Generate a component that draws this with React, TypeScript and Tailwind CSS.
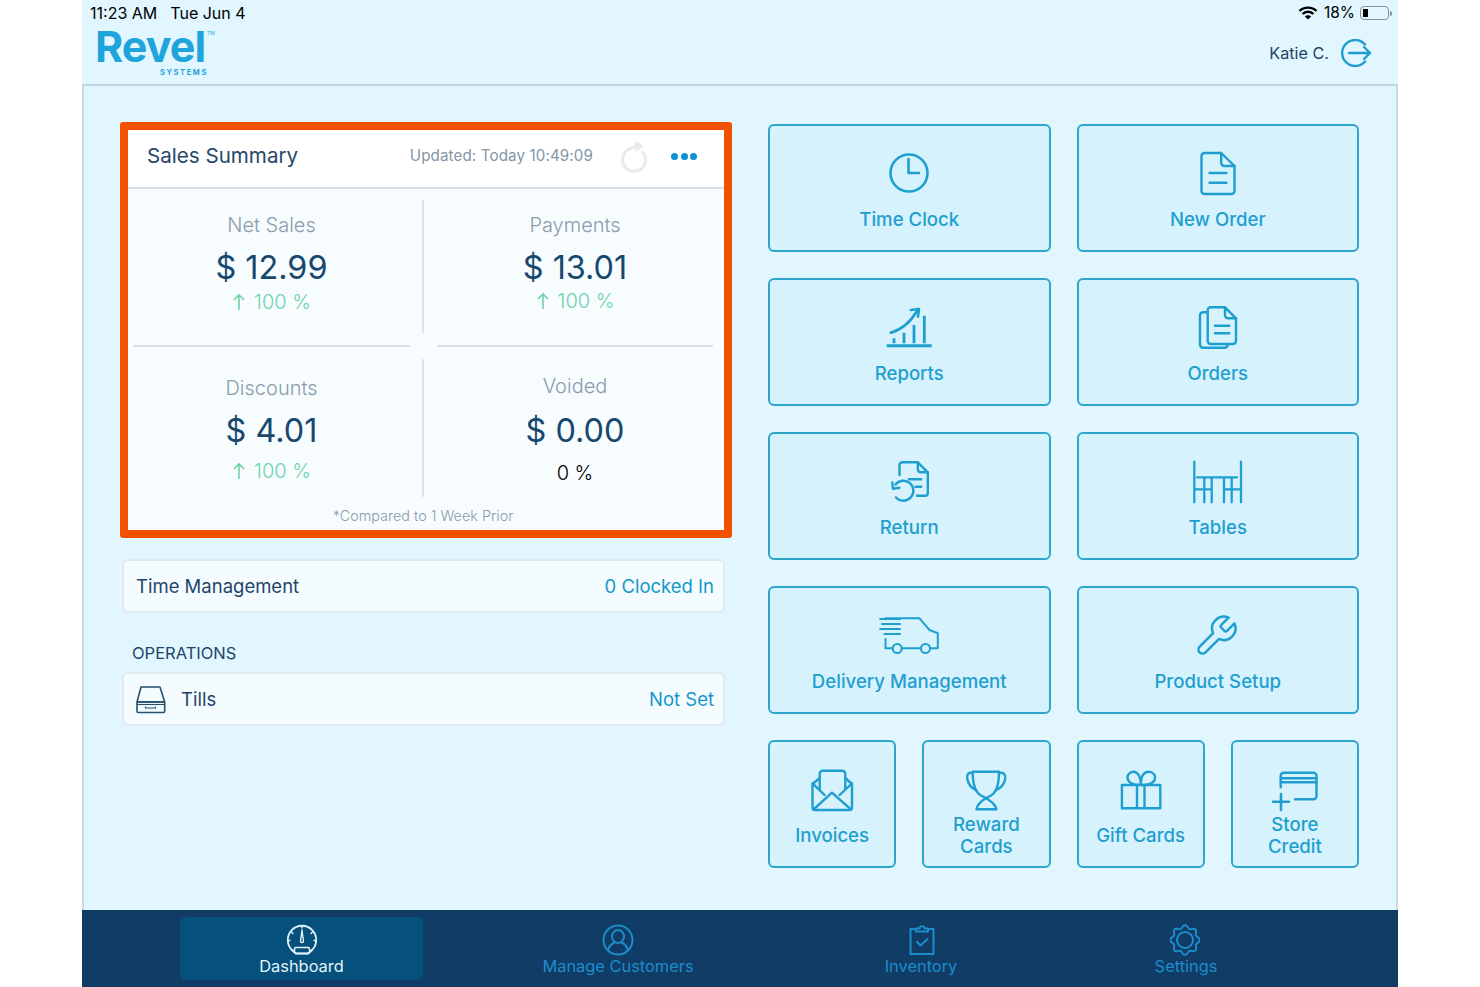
import React from "react";

const Svg = ({ children }: { children: React.ReactNode }) => (
  <svg width="60" height="50" viewBox="0 0 60 50" fill="none" stroke="#1f9fd0" strokeWidth="2.4" strokeLinecap="round" strokeLinejoin="round">
    {children}
  </svg>
);

const ClockI = () => (
  <Svg>
    <circle cx="30" cy="25" r="18.5" strokeWidth="2.6" />
    <path d="M29.5 11V25H40" strokeWidth="2.6" />
  </Svg>
);
const DocI = () => (
  <Svg>
    <g transform="translate(4.5 0)">
      <path d="M12 5H28.7L42 18V43a3 3 0 0 1-3 3H12a3 3 0 0 1-3-3V8a3 3 0 0 1 3-3Z" />
      <path d="M28.7 5V15a3 3 0 0 0 3 3H42" />
      <path d="M17 25H34M17 34.7H34" />
    </g>
  </Svg>
);
const ReportsI = () => (
  <Svg>
    <path d="M7.7 43.7H52.7" strokeWidth="3" strokeLinecap="butt" />
    <path d="M15 36.3V41.3M25 30.7V41.3M35 23V41.3M45.3 13.7V41.3" strokeWidth="2.8" strokeLinecap="butt" />
    <path d="M11.7 30.7Q28 26 38 9" strokeWidth="2.6" />
    <path d="M31.7 8L40 7L39 14.7" strokeWidth="2.6" />
  </Svg>
);
const OrdersI = () => (
  <Svg>
    <path d="M19.7 10.3H15a3 3 0 0 0-3 3V42.7a3 3 0 0 0 3 3H36.7a3 3 0 0 0 3-3V42" />
    <path d="M22.7 5.3H37L48 16.3V39a3 3 0 0 1-3 3H22.7a3 3 0 0 1-3-3V8.3a3 3 0 0 1 3-3Z" />
    <path d="M37 5.3V13.3a3 3 0 0 0 3 3H48" />
    <path d="M27 23.7H41.3M27 31.3H41.3" />
  </Svg>
);
const ReturnI = () => (
  <Svg>
    <path d="M20.5 19V9.3a3 3 0 0 1 3-3H38.8L48.8 16.3V37a2.7 2.7 0 0 1-2.7 2.7H38" />
    <path d="M38.8 6.3V13.3a3 3 0 0 0 3 3H48.8" />
    <path d="M29.8 23.3H42.2M36.5 30.7H42.2" />
    <path d="M16.5 28.5A10 10 0 1 1 17 41.5" />
    <path d="M13.3 26.5L14 32.8L20.5 31.8" />
  </Svg>
);
const TablesI = () => (
  <Svg>
    <path d="M6.3 5.7V46.3M53 5.7V46.3M9 21.3H49M16.3 21.3V46.3M23.7 21.3V46.3M36 21.3V46.3M43.7 21.3V46.3M6.3 33.3H23.7M36 33.3H53" strokeWidth="2.3" />
  </Svg>
);
const VanI = () => (
  <Svg>
    <path d="M6.5 8.3H40.5L50.5 20L58.8 23.3V38.3H51" strokeWidth="2" />
    <path d="M6.5 29V38.3H13.7M22.7 38.3H42" strokeWidth="2" />
    <circle cx="18.2" cy="38.5" r="4.5" strokeWidth="2" />
    <circle cx="46.5" cy="38.5" r="4.5" strokeWidth="2" />
    <path d="M1.2 9H21M3 14H21M1.2 19H21M5.5 24H21" strokeWidth="2" />
  </Svg>
);
const WrenchI = () => (
  <Svg>
    <g transform="translate(4.6 2.7) scale(1.95)" strokeWidth="1.25">
      <path d="M14.7 6.3a1 1 0 0 0 0 1.4l1.6 1.6a1 1 0 0 0 1.4 0l3.77-3.77a6 6 0 0 1-7.94 7.94l-6.91 6.91a2.12 2.12 0 0 1-3-3l6.91-6.91a6 6 0 0 1 7.94-7.94l-3.76 3.76z" />
    </g>
  </Svg>
);
const EnvelopeI = () => (
  <Svg>
    <path d="M17.7 25V9.7a3 3 0 0 1 3-3H40.3a3 3 0 0 1 3 3V25" />
    <path d="M17.7 14L10.5 20V43.5a2.5 2.5 0 0 0 2.5 2.5H47.5a2.5 2.5 0 0 0 2.5-2.5V20L43.3 14" />
    <path d="M10.5 19.3L22.6 31M50 19.3L37.6 31" />
    <path d="M11.5 45.5L30 28.7L49 45.5" />
  </Svg>
);
const TrophyI = () => (
  <Svg>
    <path d="M16.7 7.7H43C43 20 41 28 35 31.5C32 33 30.5 34 30 34.3C29.5 34 28 33 25 31.5C19 28 16.7 20 16.7 7.7Z" />
    <path d="M16.7 9C12.5 8 10.5 10.5 11.2 14.5C12 19 15 24 20.5 26.5M43 9C47.5 8 50 10.5 49.3 14.5C48.5 19 45.5 24 39.5 26.5" />
    <path d="M30 34.3C27 36 21.5 40 20.5 45.3H40.5C39.5 40 33 36 30 34.3Z" />
  </Svg>
);
const GiftI = () => (
  <Svg>
    <path d="M10.9 21H49.3V44.3H10.9ZM26 21V44.3M33.5 21V44.3" />
    <path d="M29.8 21C23 21 16.5 19 16.5 13.5C16.5 9.5 20 7.7 22.5 7.7C26.5 7.7 29.8 12 29.8 21C29.8 12 33 7.7 37.5 7.7C40.5 7.7 44 9.5 44 13.5C44 19 37 21 29.8 21Z" />
  </Svg>
);
const CreditI = () => (
  <Svg>
    <path d="M15.7 23.3V11.7a3 3 0 0 1 3-3H48.5a3 3 0 0 1 3 3V32.3a3 3 0 0 1-3 3H30" />
    <path d="M15.7 14.3H51.5M15.7 18.3H51.5" />
    <path d="M8 37.7H24M16 30V46" strokeWidth="2.6" />
  </Svg>
);

const Tile = ({ label, icon, wide }: { label: React.ReactNode; icon: React.ReactNode; wide?: boolean }) => (
  <div className={`${wide ? "col-span-2" : ""} h-[128px] rounded-[6px] border-2 border-[#2ea6cc] bg-[#d6f2fd] flex flex-col items-center pt-[22px]`}>
    <div className="h-[50px] flex justify-center">{icon}</div>
    <div className="h-[41px] flex items-center justify-center text-center text-[18.6px] leading-[22px] font-medium text-[#1f9fd0]">{label}</div>
  </div>
);

const Up = () => (
  <svg width="14" height="18" viewBox="0 0 14 18" fill="none" stroke="#6fd3a8" strokeWidth="1.6" className="mr-[8px]">
    <path d="M7 17V2M2 7L7 2L12 7" />
  </svg>
);

const Change = ({ cls }: { cls: string }) => (
  <div className={`flex items-center text-[20px] leading-[24px] font-light text-[#6fd3a8] ${cls}`}>
    <Up />
    100 %
  </div>
);

const Label = ({ children }: { children: React.ReactNode }) => (
  <div className="text-[20px] leading-[24px] font-light text-[#8a9bab]">{children}</div>
);
const Value = ({ children, cls }: { children: React.ReactNode; cls: string }) => (
  <div className={`text-[32.4px] leading-[40px] font-normal text-[#17486e] ${cls}`}>{children}</div>
);

const VRule = ({ cls }: { cls: string }) => (
  <div className="flex justify-center">
    <div className={`w-[2px] -ml-[1px] bg-[#dfe5ea] ${cls}`} />
  </div>
);

const RowCard = ({ children }: { children: React.ReactNode }) => (
  <div className="ml-[2px] mr-[7px] h-[54px] rounded-[6px] border-2 border-[#e0e9ee] bg-[#f5fcff] flex items-center justify-between pl-[12px] pr-[9px] pt-[1px] text-[18.5px] text-[#1f4468]">
    {children}
  </div>
);

const Refresh = () => (
  <svg width="28" height="34" viewBox="0 0 28 34" fill="none" stroke="#e8ebed" strokeWidth="3" strokeLinecap="round">
    <path d="M9 10.5A11.5 11.5 0 1 0 22.5 13" />
    <path d="M15 2L24 7L15 13Z" fill="#e8ebed" stroke="none" />
    <path d="M9 10.5C11 9 13 8 16 7.5" />
  </svg>
);

const gearPath = (() => {
  const pts: string[] = [];
  for (let i = 0; i < 144; i++) {
    const a = (i / 144) * Math.PI * 2;
    const r = 13.3 + 1.5 * Math.cos(8 * a);
    pts.push(`${(15 + r * Math.sin(a)).toFixed(2)} ${(15 - r * Math.cos(a)).toFixed(2)}`);
  }
  return "M" + pts.join("L") + "Z";
})();

const NavItem = ({ label, icon, active, cls }: { label: string; icon: React.ReactNode; active?: boolean; cls: string }) => (
  <div className={`h-[63px] flex flex-col items-center justify-start pt-[7px] rounded-[6px] ${active ? "bg-[#05507c] text-[#e3f3fa]" : "text-[#1c8ccb]"} ${cls}`}>
    <div className="h-[30px] flex justify-center">{icon}</div>
    <div className="mt-[2px] text-[16.4px] leading-[20px]">{label}</div>
  </div>
);

export default function App() {
  return (
    <div className="w-[1480px] h-[987px] bg-white flex justify-center overflow-hidden font-['Inter',sans-serif]">
      <div className="w-[1316px] h-full bg-[#e1f6fe] flex flex-col">
        <header className="h-[86px] border-b-2 border-[#c3d5dc] flex flex-col">
          <div className="h-[26px] flex items-center justify-between pl-[8px] pr-[6px] text-black">
            <div className="flex gap-[13px] text-[16px]">
              <span>11:23 AM</span>
              <span>Tue Jun 4</span>
            </div>
            <div className="flex items-center text-[15.5px]">
              <svg width="20" height="14" viewBox="0 0 20 14" fill="none" stroke="#000" strokeWidth="2.4">
                <path d="M1.5 5C6 0.5 14 0.5 18.5 5" />
                <path d="M4.5 8C7.5 5 12.5 5 15.5 8" />
                <path d="M10 13.5L6.8 10.4C8.6 8.8 11.4 8.8 13.2 10.4Z" fill="#000" stroke="none" />
              </svg>
              <span className="ml-[6px]">18%</span>
              <div className="ml-[5px] w-[29px] h-[14px] rounded-[4px] border border-[#8a9296] p-[2px]">
                <div className="w-[5px] h-full bg-black" />
              </div>
              <div className="w-[2px] h-[5px] bg-[#8a9296] rounded-r-sm ml-[1px]" />
            </div>
          </div>
          <div className="flex-1 flex items-start justify-between pl-[13px] pr-[26px]">
            <div className="relative w-[120px] -mt-[3px] text-[#1fa5dc]">
              <div className="text-[43px] leading-[46px] font-bold tracking-[-0.9px]">Revel</div>
              <div className="absolute left-[65px] top-[45px] text-[7.5px] font-bold leading-[10px] tracking-[1.6px]">SYSTEMS</div>
              <div className="absolute left-[112px] top-[7px] text-[5px] leading-[6px]">TM</div>
            </div>
            <div className="flex items-center gap-[9px] mt-[13px]">
              <span className="text-[16.2px] text-[#1f4468]">Katie C.</span>
              <svg width="34" height="28" viewBox="0 0 34 28" fill="none" stroke="#1f9fd0" strokeWidth="2.4" strokeLinecap="round" strokeLinejoin="round">
                <path d="M27 5.5A13 13 0 1 0 27 22.5" />
                <path d="M11 14H32M26 8L32 14L26 20" />
              </svg>
            </div>
          </div>
        </header>

        <main className="flex-1 border-x-2 border-[#c8dbe2] flex pl-[36px] pr-[37px] pt-[36px] gap-[36px]">
          <div className="w-[612px] flex flex-col">
            <section className="h-[416px] rounded-[3px] border-[8px] border-[#f25100] bg-[#f7fcff] flex flex-col">
              <div className="h-[59px] shrink-0 bg-white border-b-2 border-[#dcdfe2] flex items-center pl-[19px] pr-[27px] pb-[5px]">
                <div className="text-[20.6px] text-[#27476a] flex-1">Sales Summary</div>
                <div className="text-[15.2px] text-[#8496a7] tracking-[0.1px] mr-[27px]">Updated: Today 10:49:09</div>
                <Refresh />
                <div className="ml-[23px] flex gap-[2.5px]">
                  <div className="w-[7px] h-[7px] rounded-full bg-[#0e8fcf]" />
                  <div className="w-[7px] h-[7px] rounded-full bg-[#0e8fcf]" />
                  <div className="w-[7px] h-[7px] rounded-full bg-[#0e8fcf]" />
                </div>
              </div>
              <div className="grid grid-cols-[277px_27px_276px] grid-rows-[156px_2px_158px] px-[5px]">
                <div className="flex flex-col items-center pt-[24px]">
                  <Label>Net Sales</Label>
                  <Value cls="mt-[11px]">$ 12.99</Value>
                  <Change cls="mt-[2px]" />
                </div>
                <VRule cls="mt-[11px] h-[133px]" />
                <div className="flex flex-col items-center pt-[24px]">
                  <Label>Payments</Label>
                  <Value cls="mt-[11px]">$ 13.01</Value>
                  <Change cls="mt-[1px]" />
                </div>
                <div className="bg-[#d9e1e7]" />
                <div />
                <div className="bg-[#d9e1e7]" />
                <div className="flex flex-col items-center pt-[29px]">
                  <Label>Discounts</Label>
                  <Value cls="mt-[11px]">$ 4.01</Value>
                  <Change cls="mt-[8px]" />
                </div>
                <VRule cls="mt-[12px] h-[138px]" />
                <div className="flex flex-col items-center pt-[27px]">
                  <Label>Voided</Label>
                  <Value cls="mt-[13px]">$ 0.00</Value>
                  <div className="mt-[10px] text-[20px] leading-[24px] font-light text-black">0 %</div>
                </div>
              </div>
              <div className="flex-1 flex items-end justify-center pb-[5px] text-[14.4px] leading-[18px] font-light text-[#8a9bab] pr-[6px]">*Compared to 1 Week Prior</div>
            </section>

            <div className="mt-[21px]">
              <RowCard>
                <span>Time Management</span>
                <span className="text-[#1398c9]">0 Clocked In</span>
              </RowCard>
            </div>

            <div className="mt-[30px] ml-[12px] text-[16.5px] leading-[20px] text-[#1f4468]">OPERATIONS</div>
            <div className="mt-[9px]">
              <RowCard>
                <span className="flex items-center gap-[15px]">
                  <svg width="30" height="28" viewBox="0 0 30 28" fill="none" stroke="#25506f" strokeWidth="1.6" strokeLinejoin="round">
                    <path d="M5 1H24L28.7 16H1Z" />
                    <rect x="1" y="16" width="27.7" height="10.5" rx="1.2" />
                    <path d="M1 18.5H28.7" strokeWidth="1.1" />
                    <path d="M9.5 20.5V22H19.5V20.5" strokeWidth="1.2" />
                  </svg>
                  Tills
                </span>
                <span className="text-[#1398c9]">Not Set</span>
              </RowCard>
            </div>
          </div>

          <div className="w-[591px] mt-[2px] grid grid-cols-4 auto-rows-[128px] gap-[26px] content-start">
            <Tile wide label="Time Clock" icon={<ClockI />} />
            <Tile wide label="New Order" icon={<DocI />} />
            <Tile wide label="Reports" icon={<ReportsI />} />
            <Tile wide label="Orders" icon={<OrdersI />} />
            <Tile wide label="Return" icon={<ReturnI />} />
            <Tile wide label="Tables" icon={<TablesI />} />
            <Tile wide label="Delivery Management" icon={<VanI />} />
            <Tile wide label="Product Setup" icon={<WrenchI />} />
            <Tile label="Invoices" icon={<EnvelopeI />} />
            <Tile label={<>Reward<br />Cards</>} icon={<TrophyI />} />
            <Tile label="Gift Cards" icon={<GiftI />} />
            <Tile label={<>Store<br />Credit</>} icon={<CreditI />} />
          </div>
        </main>

        <nav className="h-[77px] shrink-0 bg-[#103c66] flex pl-[98px] pt-[7px]">
          <NavItem
            active
            cls="w-[243px]"
            label="Dashboard"
            icon={
              <svg width="32" height="32" viewBox="0 0 32 32" fill="none" stroke="#e3f3fa" strokeWidth="1.8" strokeLinecap="round">
                <path d="M6.5 26.5A14.2 14.2 0 1 1 25.5 26.5" />
                <path d="M6.5 26.5Q8 28 10 29.5H22Q24 28 25.5 26.5" />
                <rect x="8.5" y="23.5" width="15" height="6" rx="1.5" strokeWidth="1.5" />
                <path d="M16 6L14.5 17.5a1.6 1.6 0 0 0 3 0Z" strokeWidth="1.4" strokeLinejoin="round" />
                <path d="M16 2V4M5.5 8L7 9.5M26.5 8L25 9.5M2 16.5H4M28 16.5H30" strokeWidth="1.4" />
              </svg>
            }
          />
          <NavItem
            cls="w-[390px]"
            label="Manage Customers"
            icon={
              <svg width="32" height="32" viewBox="0 0 32 32" fill="none" stroke="#1c8ccb" strokeWidth="2">
                <circle cx="16" cy="16" r="14.5" />
                <ellipse cx="16" cy="12.5" rx="6" ry="6.5" />
                <path d="M6 26.5C7 22 10 19.5 12.5 18.5M26 26.5C25 22 22 19.5 19.5 18.5" />
              </svg>
            }
          />
          <NavItem
            cls="w-[216px]"
            label="Inventory"
            icon={
              <svg width="30" height="32" viewBox="0 0 30 32" fill="none" stroke="#1c8ccb" strokeWidth="2" strokeLinejoin="round" strokeLinecap="round" className="ml-[1px]">
                <path d="M9 5H3.5V30H26.5V5H21" />
                <path d="M9 7.5V4.5H12.5C12.8 1.5 17.2 1.5 17.5 4.5H21V7.5Z" />
                <path d="M10 18L13.5 21.5L20.5 15" />
              </svg>
            }
          />
          <NavItem
            cls="w-[314px]"
            label="Settings"
            icon={
              <svg width="30" height="32" viewBox="0 0 30 30" fill="none" stroke="#1c8ccb" strokeWidth="2" className="-ml-[3px]">
                <path d={gearPath} />
                <circle cx="15" cy="15" r="8" />
              </svg>
            }
          />
        </nav>
      </div>
    </div>
  );
}
